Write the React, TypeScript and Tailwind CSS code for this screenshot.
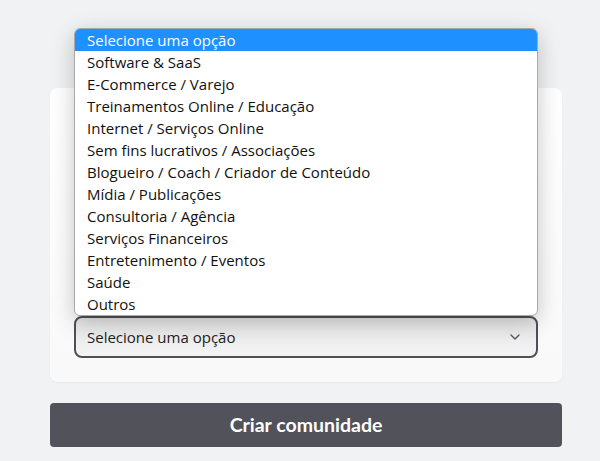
import { ChevronDown } from "lucide-react";

const options = [
  "Selecione uma opção",
  "Software & SaaS",
  "E-Commerce / Varejo",
  "Treinamentos Online / Educação",
  "Internet / Serviços Online",
  "Sem fins lucrativos / Associações",
  "Blogueiro / Coach / Criador de Conteúdo",
  "Mídia / Publicações",
  "Consultoria / Agência",
  "Serviços Financeiros",
  "Entretenimento / Eventos",
  "Saúde",
  "Outros",
];

export default function App() {
  return (
    <div className="min-h-[461px] bg-[#f1f2f4] font-['Open_Sans',sans-serif] pl-[50px] pr-[38px] pt-[88px]">
      <div className="relative rounded-lg bg-gradient-to-b from-white to-[#f9f9fa] px-6 pb-6 pt-[228px] shadow-[0_1px_2px_rgba(0,0,0,0.04)]">
        <div className="relative">
          <div className="absolute bottom-full left-0 right-0 z-10 overflow-hidden rounded-md border border-[#a9a9ab] bg-white shadow-[0_6px_22px_rgba(0,0,0,0.22)]">
            {options.map((o, i) => (
              <div
                key={o}
                className={
                  i === 0
                    ? "h-[22px] bg-[#1e90ff] px-3 text-[15px] leading-[22px] text-white"
                    : "h-[22px] px-3 text-[15px] leading-[22px] text-[#111]"
                }
              >
                {o}
              </div>
            ))}
          </div>
          <div className="flex h-[42px] items-center justify-between rounded-lg border-2 border-[#4f4f55] bg-gradient-to-b from-[#e6e6e7] to-[#f4f4f5] pl-[11px] pr-[13px] text-[15px] text-[#222]">
            <span>Selecione uma opção</span>
            <ChevronDown className="h-4 w-4 text-[#55555c]" strokeWidth={2} />
          </div>
        </div>
      </div>
      <button className="mt-[21px] flex h-[44px] w-full items-center justify-center rounded bg-[#52525b] font-['Lato',sans-serif] text-[19.5px] font-bold text-white">
        Criar comunidade
      </button>
    </div>
  );
}
